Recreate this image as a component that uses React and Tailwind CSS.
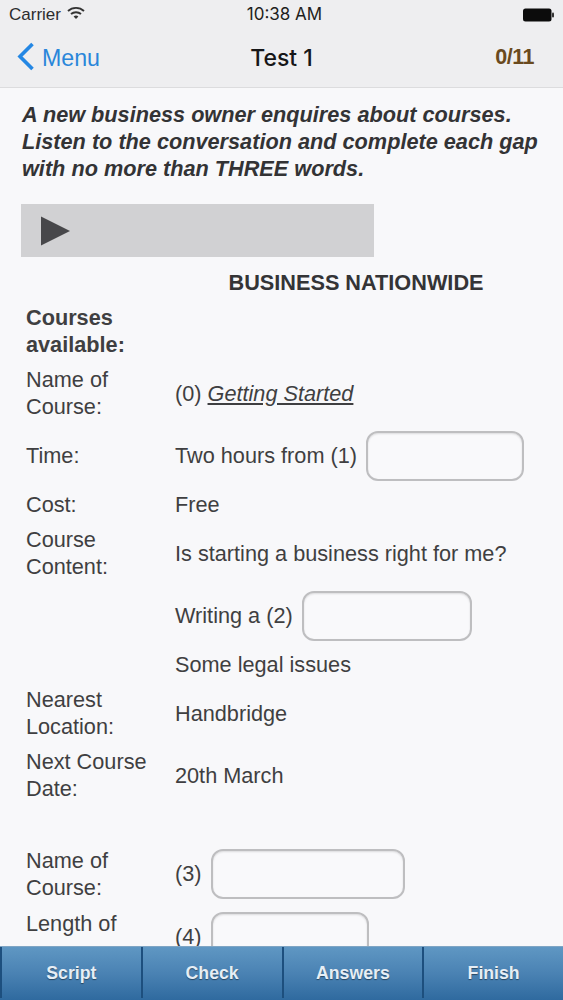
import React from "react";

const Input = ({ w }) => (
  <div className={`${w} h-[50px] shrink-0 rounded-[12px] border-2 border-[#bebec0] bg-[#f9f9fb] shadow-[inset_0_1px_2px_rgba(0,0,0,0.12)]`} />
);

const Row = ({ label, children, h = "py-1", bold }) => (
  <div className={`flex items-center ${h}`}>
    <div className={`w-[149px] pr-2 shrink-0 ${bold ? "font-bold" : ""}`}>{label}</div>
    <div className="flex-1 flex items-center min-w-0">{children}</div>
  </div>
);

const Wifi = () => (
  <svg width="18" height="14" viewBox="0 0 18 14" className="ml-[6px] mb-[4px]">
    <path d="M1 5 C5.5 0.8 12.5 0.8 17 5" fill="none" stroke="#333" strokeWidth="1.9" />
    <path d="M4 8 C6.8 5.6 11.2 5.6 14 8" fill="none" stroke="#333" strokeWidth="1.9" />
    <path d="M6.6 10.4 C8 9.2 10 9.2 11.4 10.4 L9 13 Z" fill="#333" />
  </svg>
);

const Tab = ({ children }) => (
  <div className="flex-1 flex items-center justify-center pt-[2px] border-l-2 border-[#1d4f7e] text-[#e6eef5] font-bold text-[17.7px] [text-shadow:0_1px_1px_rgba(0,0,0,0.45)]">
    {children}
  </div>
);

export default function App() {
  return (
    <div className="w-[563px] h-[1000px] flex flex-col overflow-hidden bg-[#f8f8fa] text-[#3f3f41] text-[21.7px] leading-[27px] font-['Liberation_Sans',Arial,sans-serif]">
      <header className="h-[88px] shrink-0 bg-[#eeeef0] border-b border-[#dcdcde] flex flex-col">
        <div className="h-[29px] flex items-center justify-between pl-[9px] pr-2 text-[#2c2c2e] text-[17px] relative">
          <div className="flex items-center">
            <span>Carrier</span>
            <Wifi />
          </div>
          <span className="absolute left-[6px] right-0 text-center text-[#1e1e20] font-['Inter',sans-serif] text-[17px]">10:38 AM</span>
          <svg width="32" height="14" viewBox="0 0 32 14">
            <rect x="0" y="0.5" width="28.5" height="13" rx="2.5" fill="#0c0c0c" />
            <rect x="29" y="4.5" width="2" height="5" rx="1" fill="#333" />
          </svg>
        </div>
        <div className="flex-1 flex items-center relative">
          <svg width="18" height="30" viewBox="0 0 18 30" className="ml-[17px] mb-[2px]">
            <path d="M15.5 2 L3 14.5 L15.5 27" fill="none" stroke="#2487e4" strokeWidth="3.6" />
          </svg>
          <span className="ml-[7px] text-[#2a86da] text-[23.2px] mt-[1px]">Menu</span>
          <span className="absolute left-0 w-[523px] ml-[20px] text-center text-[#161618] text-[23px] font-medium font-['Inter',sans-serif]">Test 1</span>
          <span className="absolute right-[29px] text-[#6a4a1e] text-[21.5px] font-bold mb-[2px] tracking-[-0.5px]">0/11</span>
        </div>
      </header>

      <main className="flex-1 min-h-0 overflow-hidden">
        <div className="pl-[22px] pr-4 pt-[13px] font-bold italic text-[21.7px] leading-[27px] text-[#333335]">
          A new business owner enquires about courses.<br />
          Listen to the conversation and complete each gap<br />
          with no more than THREE words.
        </div>
        <div className="ml-[21px] mt-[22px] w-[353px] h-[53px] bg-[#d1d1d3] flex items-center pl-[20px]">
          <svg width="29" height="30" viewBox="0 0 29 30">
            <path d="M0 0.5 L29 15 L0 29.5 Z" fill="#47474a" />
          </svg>
        </div>

        <div className="pl-[26px] pr-[26px] mt-[8px]">
          <Row>
            <div className="w-full text-center font-bold text-[#343436]">BUSINESS NATIONWIDE</div>
          </Row>
          <Row label="Courses available:" bold />
          <Row label="Name of Course:">
            <span>(0)&nbsp;<span className="italic underline">Getting Started</span></span>
          </Row>
          <Row label="Time:" h="h-[63px]">
            <span className="mr-[9px] whitespace-nowrap">Two hours from (1)</span>
            <Input w="w-[158px]" />
          </Row>
          <Row label="Cost:">Free</Row>
          <Row label="Course Content:">Is starting a business right for me?</Row>
          <Row h="h-[63px]">
            <span className="mr-[9px] whitespace-nowrap">Writing a (2)</span>
            <Input w="w-[170px]" />
          </Row>
          <Row>Some legal issues</Row>
          <Row label="Nearest Location:">Handbridge</Row>
          <Row label="Next Course Date:">20th March</Row>
          <div className="h-[36px]" />
          <Row label="Name of Course:" h="h-[63px]">
            <span className="mr-[9px]">(3)</span>
            <Input w="w-[194px]" />
          </Row>
          <Row label={<>Length of<br />&nbsp;</>} h="h-[63px]">
            <span className="mr-[9px]">(4)</span>
            <Input w="w-[158px]" />
          </Row>
        </div>
      </main>

      <footer className="h-[54px] shrink-0 flex pb-[2px] border-t border-[#7fa5c4] bg-[linear-gradient(#5f97c3,#4a82b3_50%,#2f6a9f)]">
        <Tab>Script</Tab>
        <Tab>Check</Tab>
        <Tab>Answers</Tab>
        <Tab>Finish</Tab>
      </footer>
    </div>
  );
}
